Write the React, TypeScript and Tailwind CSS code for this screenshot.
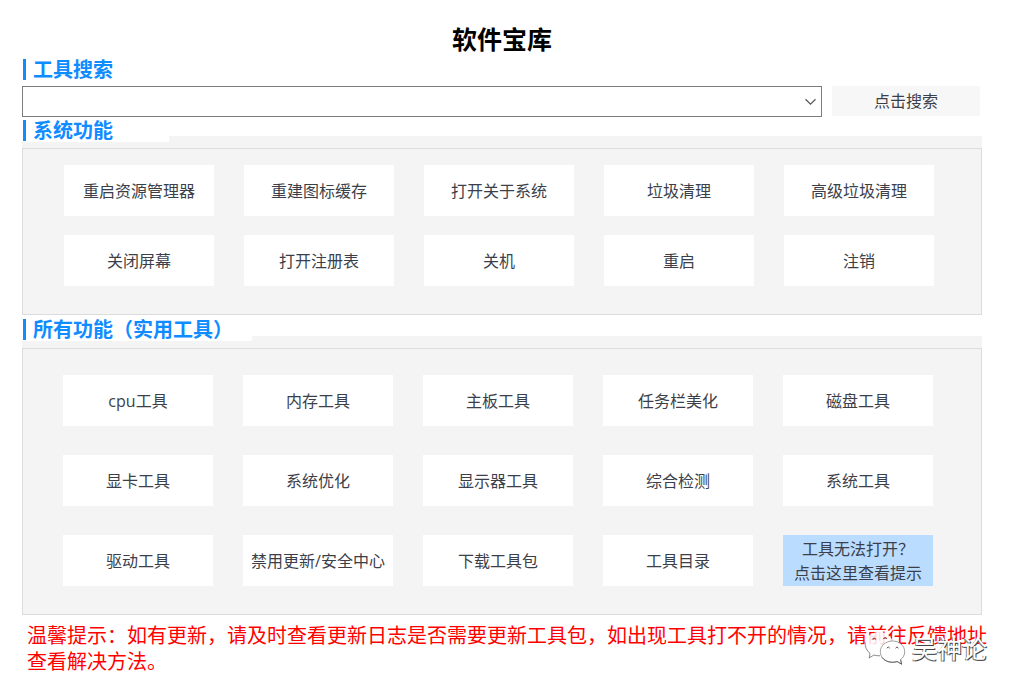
import type { ReactNode } from "react";

const systemActions = [
  "重启资源管理器",
  "重建图标缓存",
  "打开关于系统",
  "垃圾清理",
  "高级垃圾清理",
  "关闭屏幕",
  "打开注册表",
  "关机",
  "重启",
  "注销",
];

const tools = [
  "cpu工具",
  "内存工具",
  "主板工具",
  "任务栏美化",
  "磁盘工具",
  "显卡工具",
  "系统优化",
  "显示器工具",
  "综合检测",
  "系统工具",
  "驱动工具",
  "禁用更新/安全中心",
  "下载工具包",
  "工具目录",
];

function HeadingText({ children }: { children: ReactNode }) {
  return (
    <span className="flex h-6 items-center gap-[7px] pl-px text-xl leading-6 font-bold text-[#0f8cff] font-['Noto_Sans_CJK_SC',sans-serif]">
      <span className="h-[21px] w-[3px] bg-[#0f8cff]" />
      {children}
    </span>
  );
}

function ToolButton({ children }: { children: ReactNode }) {
  return (
    <button type="button" className="h-[51px] bg-white whitespace-nowrap hover:bg-[#badcff]">
      {children}
    </button>
  );
}

function WeChatIcon() {
  return (
    <svg width="42" height="36" viewBox="0 0 42 36" fill="none" aria-hidden="true">
      <path
        d="M15 2C7.300 2 1 7.200 1 14c0 3.800 1.900 7 5 9.200L5.200 28l4.600-3c1.700.6 3.400.9 5.200.9 7.700 0 14-5.200 14-11.900S22.700 2 15 2Z"
        fill="#fff"
        fillOpacity="0.85"
      />
      <path
        d="M1 12c-.2 5 1.800 8.800 5 11.200L5.200 28l4.600-3c1.900.6 3.900.9 6.200.8"
        stroke="#555"
        strokeWidth="0.7"
      />
      <path d="M8.500 9.500q1.700-2.500 3.400 0M19.500 9q1.700-2.500 3.400 0" stroke="#a44" strokeWidth="1.300" />
      <path
        d="M28.500 11C21.700 11 16.300 15.800 16.300 21.700S21.700 32.300 28.500 32.300c1.700 0 3.300-.3 4.700-.8l4.400 2.700-1-4.600c2.600-1.900 4.100-4.700 4.100-7.900C40.700 15.800 35.300 11 28.500 11Z"
        fill="#fff"
        stroke="#777"
        strokeWidth="0.7"
      />
      <path
        d="M18 27.500c2.200 3 6 4.800 10.500 4.800 1.700 0 3.300-.3 4.700-.8l4.400 2.700-1-4.600"
        stroke="#444"
        strokeWidth="0.7"
      />
      <path d="M22.800 18.200q1.500-2.500 3 0M31.500 18.200q1.500-2.500 3 0" stroke="#444" strokeWidth="0.900" />
    </svg>
  );
}

export default function App() {
  return (
    <main className="min-h-screen bg-white pt-[21px] pr-[37px] pb-5 pl-[22px] font-['Open_Sans','Noto_Sans_CJK_SC',sans-serif] text-base text-[#3c3f4a]">
      <h1 className="h-9 text-center text-[25px] leading-9 font-bold text-black">软件宝库</h1>

      <form onSubmit={(e) => e.preventDefault()}>
        <label htmlFor="tool-search" className="block h-[29px]">
          <HeadingText>工具搜索</HeadingText>
        </label>
        <div className="flex gap-2.5 pr-0.5">
          <div className="relative flex-1">
            <select
              id="tool-search"
              defaultValue=""
              className="block h-[31px] w-full appearance-none border border-[#7d7d7d] bg-white px-2"
            >
              <option value=""></option>
              {tools.map((tool) => (
                <option key={tool}>{tool}</option>
              ))}
            </select>
            <svg
              className="pointer-events-none absolute top-3 right-1.5"
              width="11"
              height="8"
              viewBox="0 0 11 8"
              fill="none"
              aria-hidden="true"
            >
              <path d="M0.500 1.200 5.500 6.200 10.500 1.200" stroke="#5a5a5a" strokeWidth="1.300" />
            </svg>
          </div>
          <button type="submit" className="h-[30px] w-[148px] bg-[#f7f7f7]">
            点击搜索
          </button>
        </div>
      </form>

      {/* System actions */}
      <section className="mt-[19px] flow-root bg-[#f4f4f4]">
        <h2 className="-mt-[18px] w-[147px] bg-white">
          <HeadingText>系统功能</HeadingText>
        </h2>
        <div className="mt-1.5 grid grid-cols-5 gap-x-[30px] gap-y-[19px] border border-[#dcdcdc] pt-4 pr-[47px] pb-7 pl-[41px]">
          {systemActions.map((action) => (
            <ToolButton key={action}>{action}</ToolButton>
          ))}
        </div>
      </section>

      {/* All tools */}
      <section className="mt-[21px] flow-root bg-[#f4f4f4]">
        <h2 className="-mt-[19px] w-[230px] bg-white">
          <HeadingText>所有功能（实用工具）</HeadingText>
        </h2>
        <div className="mt-[7px] grid grid-cols-5 gap-x-[30px] gap-y-[29px] border border-[#dcdcdc] pt-[26px] pr-12 pb-7 pl-10">
          {tools.map((tool) => (
            <ToolButton key={tool}>{tool}</ToolButton>
          ))}
          <button type="button" className="h-[51px] bg-[#badcff] leading-6 whitespace-nowrap">
            工具无法打开？
            <br />
            点击这里查看提示
          </button>
        </div>
      </section>

      <footer className="relative -mr-2.5 pt-2 pl-[5px]">
        <p className="text-xl leading-[26px] text-[#ff0000]">
          温馨提示：如有更新，请及时查看更新日志是否需要更新工具包，如出现工具打不开的情况，请前往反馈地址查看解决方法。
        </p>
        <div className="absolute top-[15px] right-[5px] flex items-center gap-1.5">
          <WeChatIcon />
          <span className="text-[25px] leading-9 text-white [text-shadow:1px_1px_0_#444,-1px_1px_0_#888]">吴神论</span>
        </div>
      </footer>
    </main>
  );
}
